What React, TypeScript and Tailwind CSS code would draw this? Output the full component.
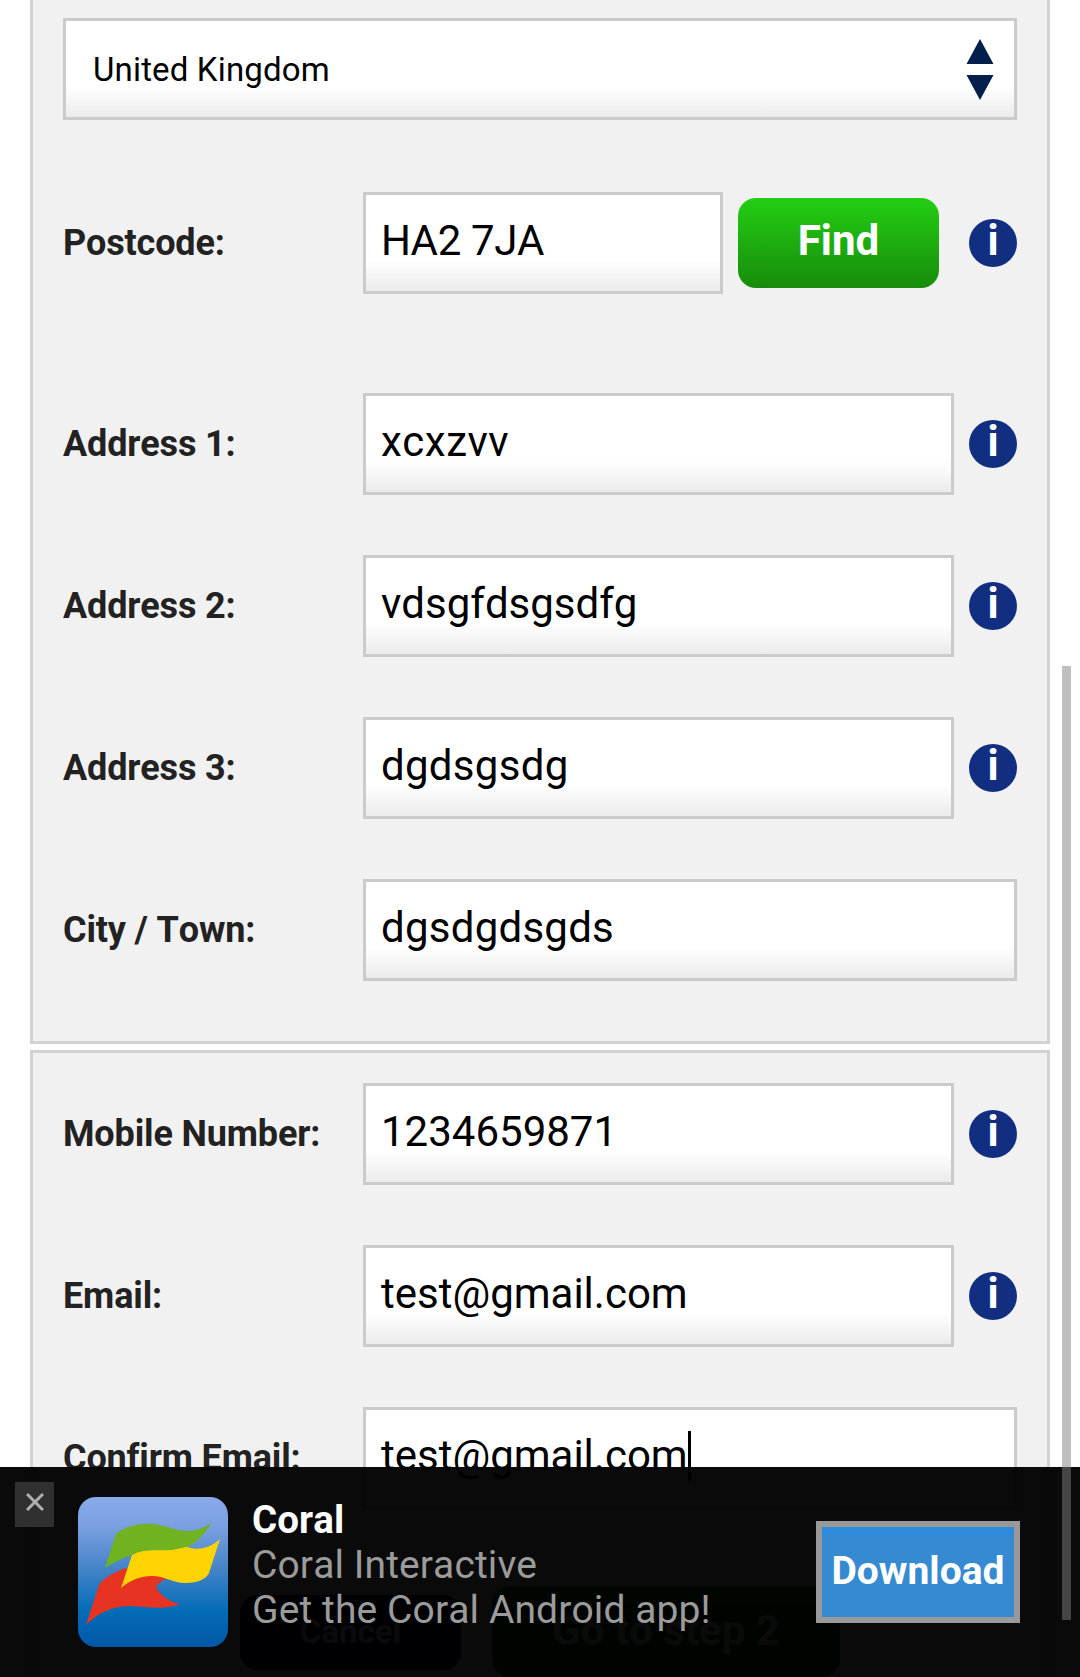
import type { ReactNode } from "react";

function InfoBadge() {
  return (
    <span className="flex h-12 w-12 shrink-0 justify-center rounded-full bg-[#122e80] text-[42px] leading-[43px] font-bold text-white">
      i
    </span>
  );
}

const fieldBox =
  "flex h-[102px] items-center border-[3px] border-[#cbcbcb] bg-[linear-gradient(to_bottom,#ffffff_0%,#ffffff_68%,#ebebeb_100%)]";

function Row({ label, children }: { label: string; children: ReactNode }) {
  return (
    <div className="flex h-[102px] items-center">
      <label className="w-[300px] shrink-0 text-[36px] font-bold tracking-[-0.15px] whitespace-nowrap text-[#222222]">
        {label}
      </label>
      {children}
    </div>
  );
}

function Field({
  value,
  caret = false,
  tracking = "tracking-normal",
}: {
  value: string;
  caret?: boolean;
  tracking?: string;
}) {
  return (
    <div className={`${fieldBox} flex-1 pb-[5px] pl-[15px] text-[42px] text-black`}>
      <span className={`whitespace-nowrap ${tracking}`}>{value}</span>
      {caret && <span className="h-[50px] w-[3px] bg-black" />}
    </div>
  );
}

function InfoRow({ label, value, tracking }: { label: string; value: string; tracking?: string }) {
  return (
    <Row label={label}>
      <div className="flex flex-1 items-center gap-[15px]">
        <Field value={value} tracking={tracking} />
        <InfoBadge />
      </div>
    </Row>
  );
}

function CoralLogo() {
  return (
    <svg className="h-[150px] w-[150px] shrink-0" viewBox="0 0 150 150">
      <defs>
        <linearGradient id="sky" x1="0" y1="0" x2="0" y2="1">
          <stop offset="0" stopColor="#8aaaea" />
          <stop offset="0.2" stopColor="#7a9fe0" />
          <stop offset="0.5" stopColor="#3f82c6" />
          <stop offset="0.75" stopColor="#056db8" />
          <stop offset="1" stopColor="#0057a6" />
        </linearGradient>
      </defs>
      <rect width="150" height="150" rx="18" fill="url(#sky)" />
      <path d="M8 128 L21 88 C26 80 38 75 47 71 L90 80 C84 84 79 87 78 90 C82 98 91 105 102 107 C90 113 70 110 52 109 C32 109 18 118 8 128 Z" fill="#e63322" />
      <path d="M27 71 L38 37 C47 29 62 26 76 27 C90 29 97 34 110 34 C119 34 127 30 134 26 C127 35 121 45 109 50 C92 57 70 53 54 58 C44 61 35 66 27 71 Z" fill="#71b221" />
      <path d="M43 91 L54 58 C66 51 80 54 94 53 C101 52 106 50 109 50 C121 54 132 51 142 42 L131 76 C128 83 117 86 108 86 C94 86 87 79 74 79 C61 79 51 84 43 91 Z" fill="#fdd402" />
    </svg>
  );
}

function Banner() {
  return (
    <aside className="absolute inset-x-0 bottom-0 flex h-[210px] bg-black/96 pl-[15px]">
      <button className="mt-[15px] flex h-[45px] w-[39px] shrink-0 items-center justify-center bg-[#303030] pb-[5px]">
        <svg className="h-[18px] w-[18px]" viewBox="0 0 18 18" stroke="#b0b0b0" strokeWidth="3">
          <path d="M1 1 17 17M17 1 1 17" />
        </svg>
      </button>
      <div className="mt-[30px] ml-6 flex">
        <CoralLogo />
        <div className="ml-6 text-[39px] leading-[45px] tracking-[0.1px] whitespace-nowrap text-[#9b9b9b]">
          <p className="text-[38.5px] font-bold text-white">Coral</p>
          <p className="pt-px">Coral Interactive</p>
          <p>Get the Coral Android app!</p>
        </div>
      </div>
      <button className="mt-[54px] mr-[60px] ml-auto flex h-[102px] w-[204px] items-center justify-center border-[6px] border-[#999999] bg-[linear-gradient(to_bottom,#2c8cdc_0,#368ad2_14px)] pb-[2px] text-[39px] font-bold text-white">
        Download
      </button>
    </aside>
  );
}

export default function App() {
  return (
    <div className="relative h-[1677px] w-[1080px] overflow-hidden bg-white font-[Roboto,sans-serif] [font-kerning:none]">
      <main className="mx-[30px] flex flex-col gap-[6px]">
        <section className="h-[1044px] border-x-[3px] border-b-[3px] border-[#d2d2d2] bg-[#f1f1f1] px-[30px] pt-[18px]">
          <div className={`${fieldBox} justify-between pr-[20px] pl-[27px] text-[33px] tracking-[0.16px] text-black`}>
            <span className="pt-[2px]">United Kingdom</span>
            <svg className="h-[63px] w-[28px]" viewBox="0 0 28 63" fill="#02204b">
              <path d="M14 1 27.5 26H.5ZM.5 37H27.5L14 62Z" />
            </svg>
          </div>
          <div className="mt-[72px]">
            <Row label="Postcode:">
              <div className="flex w-[360px]">
                <Field value="HA2 7JA" tracking="tracking-[-0.35px]" />
              </div>
              <button className="ml-[15px] h-[90px] w-[201px] rounded-[18px] bg-linear-to-b from-[#23cf13] to-[#178c0b] pb-[5px] text-[42px] font-bold text-white">
                Find
              </button>
              <div className="ml-[30px]">
                <InfoBadge />
              </div>
            </Row>
          </div>
          <div className="mt-[99px] flex flex-col gap-[60px]">
            <InfoRow label="Address 1:" value="xcxzvv" tracking="tracking-[0.5px]" />
            <InfoRow label="Address 2:" value="vdsgfdsgsdfg" />
            <InfoRow label="Address 3:" value="dgdsgsdg" tracking="tracking-[0.3px]" />
            <Row label="City / Town:">
              <Field value="dgsdgdsgds" tracking="tracking-[0.25px]" />
            </Row>
          </div>
        </section>
        <section className="h-[660px] border-[3px] border-[#d2d2d2] bg-[#f1f1f1] px-[30px] pt-[30px]">
          <div className="flex flex-col gap-[60px]">
            <InfoRow label="Mobile Number:" value="1234659871" />
            <InfoRow label="Email:" value="test@gmail.com" />
            <Row label="Confirm Email:">
              <Field value="test@gmail.com" caret />
            </Row>
          </div>
          <div className="mt-[78px] ml-[177px] flex items-center gap-[31px]">
            <button className="h-[75px] w-[221px] rounded-[18px] bg-[#00003c] text-[33px] font-bold text-white">
              Cancel
            </button>
            <button className="h-[90px] w-[348px] rounded-[18px] bg-linear-to-b from-[#0c7a04] to-[#066002] pb-[4px] text-[42px] font-bold text-white">
              Go to step 2
            </button>
          </div>
        </section>
      </main>
      <Banner />
      <div className="absolute top-[666px] right-[9px] h-[954px] w-[9px] bg-[#808080]/50" />
    </div>
  );
}
